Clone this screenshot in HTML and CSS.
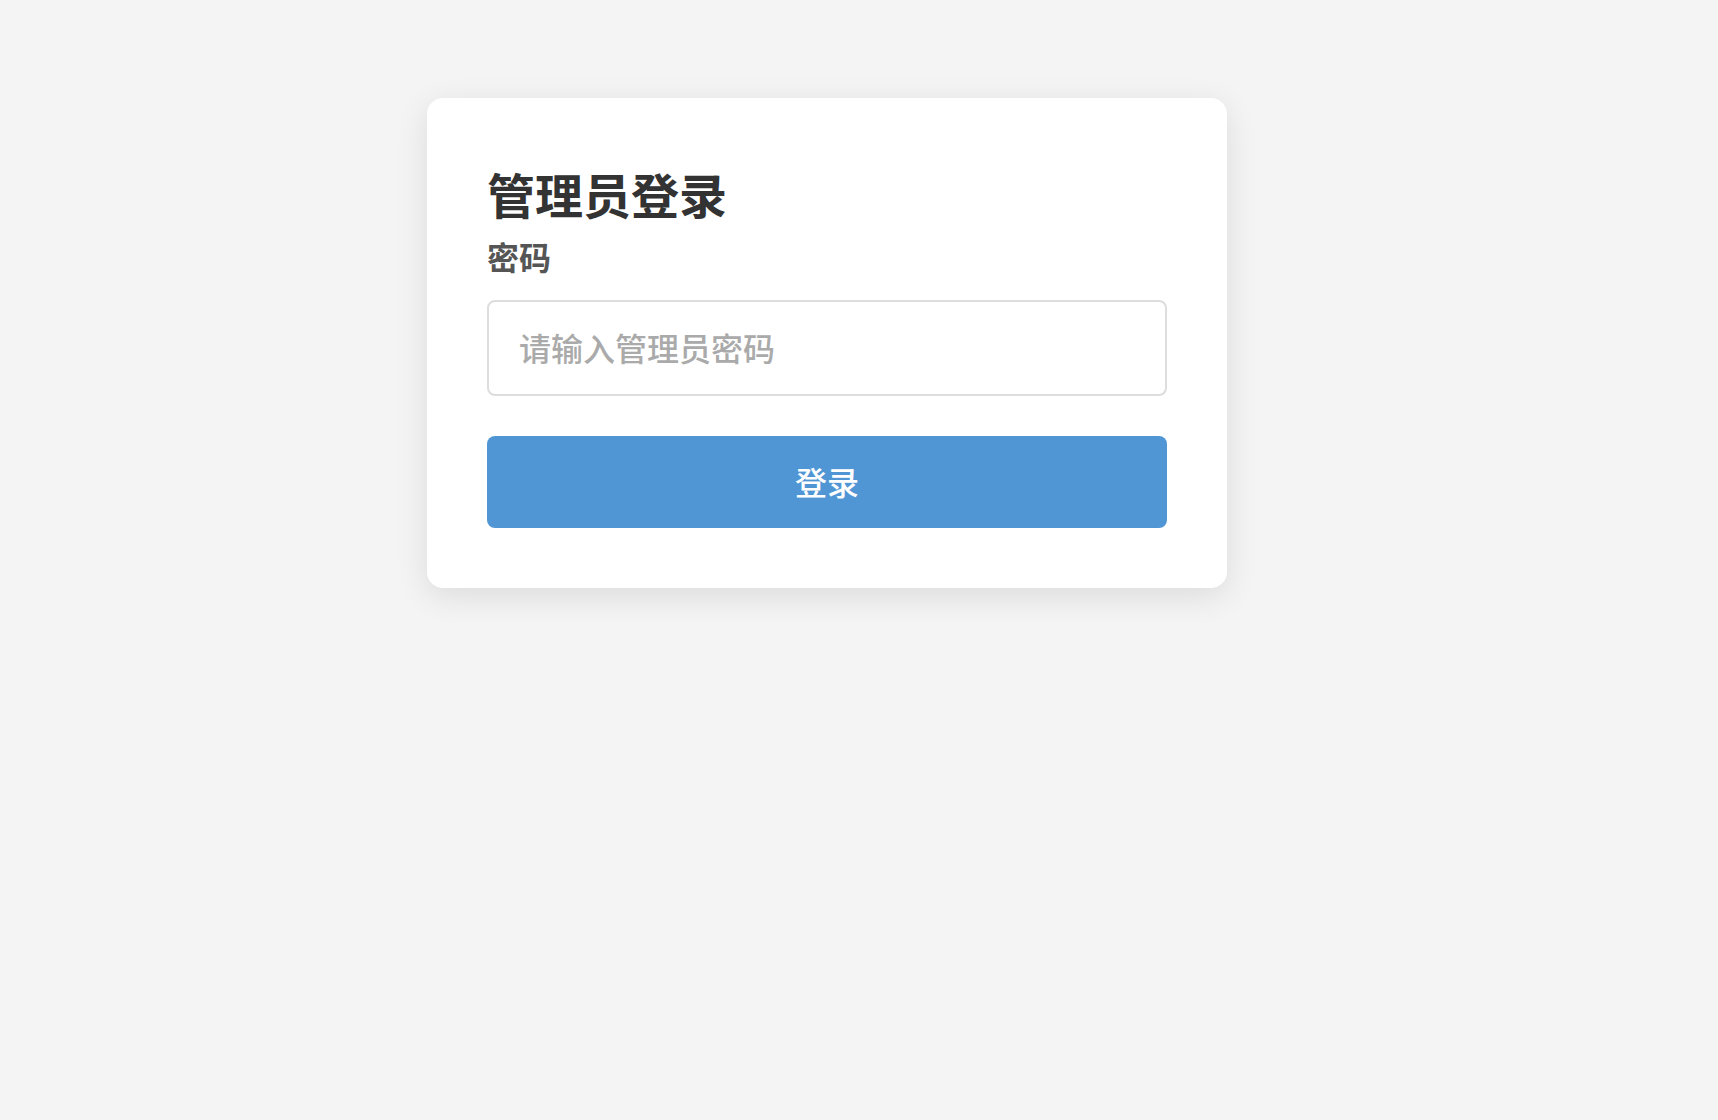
FILE: index.html
```html
<!DOCTYPE html>
<html lang="zh-CN">
<head>
<meta charset="utf-8">
<title>管理员登录</title>
<link rel="stylesheet" href="styles.css">
</head>
<body>
<div class="page">
  <form class="card">
    <h1 class="title">管理员登录</h1>
    <label class="label" for="pwd">密码</label>
    <input class="input" id="pwd" type="password" placeholder="请输入管理员密码">
    <button class="btn" type="button">登录</button>
  </form>
</div>
</body>
</html>
```

FILE: styles.css
```css
html, body {
  margin: 0;
  padding: 0;
  background: #f4f4f4;
  font-family: "Noto Sans CJK SC", "Noto Sans", sans-serif;
}
.page {
  min-height: 1120px;
  box-sizing: border-box;
  padding: 98px 0 100px 427px;
}
.card {
  box-sizing: border-box;
  width: 800px;
  height: 490px;
  padding: 60px;
  background: #fff;
  border-radius: 16px;
  box-shadow: 0 8px 32px rgba(0, 0, 0, 0.1);
  display: flex;
  flex-direction: column;
}
.title {
  margin: 0;
  font-size: 48px;
  line-height: 70px;
  font-weight: 700;
  color: #333;
}
.label {
  margin-top: 5px;
  font-size: 32px;
  line-height: 46px;
  font-weight: 700;
  color: #555;
}
.input {
  box-sizing: border-box;
  margin-top: 21px;
  width: 680px;
  height: 96px;
  padding: 0 30px 3px;
  border: 2px solid #ddd;
  border-radius: 8px;
  font-family: "Noto Sans CJK SC", "Noto Sans", sans-serif;
  font-size: 32px;
  font-weight: 500;
  color: #333;
  outline: none;
}
.input::placeholder {
  color: #aaa;
}
.btn {
  margin-top: 40px;
  width: 680px;
  height: 92px;
  border: none;
  border-radius: 8px;
  background: #5096d5;
  color: #fff;
  font-family: "Noto Sans CJK SC", "Noto Sans", sans-serif;
  font-size: 32px;
  font-weight: 500;
  padding: 0 0 2px;
}
```
